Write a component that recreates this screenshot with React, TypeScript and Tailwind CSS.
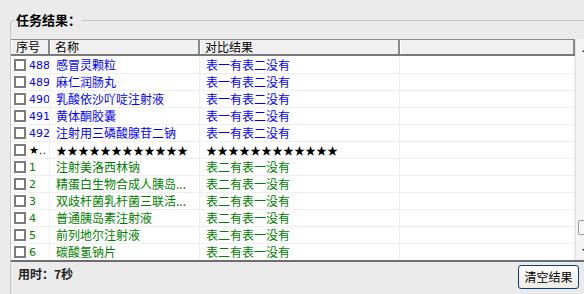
import React from "react";

type Row = { no: string; name: string; result: string; color: string; star?: boolean };

const rows: Row[] = [
  { no: "488", name: "感冒灵颗粒", result: "表一有表二没有", color: "text-[#0000ff]" },
  { no: "489", name: "麻仁润肠丸", result: "表一有表二没有", color: "text-[#0000ff]" },
  { no: "490", name: "乳酸依沙吖啶注射液", result: "表一有表二没有", color: "text-[#0000ff]" },
  { no: "491", name: "黄体酮胶囊", result: "表一有表二没有", color: "text-[#0000ff]" },
  { no: "492", name: "注射用三磷酸腺苷二钠", result: "表一有表二没有", color: "text-[#0000ff]" },
  { no: "★‥", name: "★★★★★★★★★★★★", result: "★★★★★★★★★★★★", color: "text-black", star: true },
  { no: "1", name: "注射美洛西林钠", result: "表二有表一没有", color: "text-[#008000]" },
  { no: "2", name: "精蛋白生物合成人胰岛...", result: "表二有表一没有", color: "text-[#008000]" },
  { no: "3", name: "双歧杆菌乳杆菌三联活...", result: "表二有表一没有", color: "text-[#008000]" },
  { no: "4", name: "普通胰岛素注射液", result: "表二有表一没有", color: "text-[#008000]" },
  { no: "5", name: "前列地尔注射液", result: "表二有表一没有", color: "text-[#008000]" },
  { no: "6", name: "碳酸氢钠片", result: "表二有表一没有", color: "text-[#008000]" },
];

const font = "font-['Noto_Sans_CJK_SC',sans-serif]";

function HeaderCell({ label, w }: { label: string; w: string }) {
  return (
    <div className={`${w} h-full flex items-center pl-[4px] border-r-2 border-[#8a8a8a] border-l border-l-white text-[12px] text-black leading-none`}>
      {label}
    </div>
  );
}

export default function App() {
  return (
    <div className={`w-[584px] h-[294px] bg-[#ebebeb] overflow-hidden ${font}`}>
      <div className="relative ml-[10px] mt-[20px] h-[274px] border-l border-t border-[#c9c1c9] rounded-tl-[4px] flex flex-col">
        <div className="absolute -top-[11px] left-[4px] px-[1px] bg-[#ebebeb] text-[13px] font-bold leading-[20px] text-black">
          任务结果：
        </div>

        <div className="mt-[18px] flex h-[223px] border-b-2 border-[#6e6e6e]">
          <div className="w-[564px] flex flex-col bg-white">
            <div className="h-[17px] shrink-0 flex bg-[#f0f0f0] border-t border-[#8a8a8a] border-b-2 border-b-[#7a7a7a]">
              <HeaderCell label="序号" w="w-[39px]" />
              <HeaderCell label="名称" w="w-[150px]" />
              <HeaderCell label="对比结果" w="w-[200px]" />
              <div className="w-[175px] h-full border-r-2 border-[#8a8a8a] border-l border-l-white" />
            </div>
            <div className="flex-1 overflow-hidden pt-[1px]">
              {rows.map((r, i) => (
                <div key={i} className="h-[17px] flex border-b border-[#efefef]">
                  <div className="w-[39px] flex items-center pl-[3px] border-r border-[#efefef]">
                    <span className="w-[12px] h-[12px] border-2 border-[#7c7c7c] bg-white shrink-0" />
                    <span className={`ml-[3px] text-[11px] leading-none font-['DejaVu_Sans',sans-serif] ${r.color} whitespace-nowrap overflow-hidden`}>
                      {r.no}
                    </span>
                  </div>
                  <div className={`w-[150px] flex items-center pl-[6px] border-r border-[#efefef] ${r.star ? "text-[11px]" : "text-[12px]"} leading-none whitespace-nowrap overflow-hidden ${r.color}`}>
                    {r.name}
                  </div>
                  <div className={`w-[200px] flex items-center pl-[6px] border-r border-[#efefef] ${r.star ? "text-[11px]" : "text-[12px]"} leading-none whitespace-nowrap overflow-hidden ${r.color}`}>
                    {r.result}
                  </div>
                  <div className="w-[175px] border-r border-[#efefef]" />
                </div>
              ))}
            </div>
          </div>
          <div className="w-[17px] bg-[#f4f4f4] border-l border-[#e2e2e2] flex flex-col items-start pl-[2px]">
            <svg width="8" height="5" viewBox="0 0 8 5" className="mt-[8px] ml-[4px]">
              <path d="M0 5 L4 1 L8 5 Z" fill="#222" />
            </svg>
            <div className="flex-1" />
            <div className="w-[14px] h-[15px] border border-[#9a9a9a] rounded-[2px] bg-[#f8f8f8] mb-[14px]" />
            <svg width="8" height="5" viewBox="0 0 8 5" className="mb-[6px] ml-[4px]">
              <path d="M0 0 L8 0 L4 4 Z" fill="#222" />
            </svg>
          </div>
        </div>

        <div className="flex items-start justify-between pl-[7px] pr-[5px] pt-[3px]">
          <span className="mt-[3px] text-[12px] font-bold text-[#202020] leading-none">用时：7秒</span>
          <button className="w-[61px] h-[24px] border border-[#0e3e74] rounded-[3px] bg-gradient-to-b from-white to-[#ecebe5] text-[12px] text-black leading-none">
            清空结果
          </button>
        </div>
      </div>
    </div>
  );
}
